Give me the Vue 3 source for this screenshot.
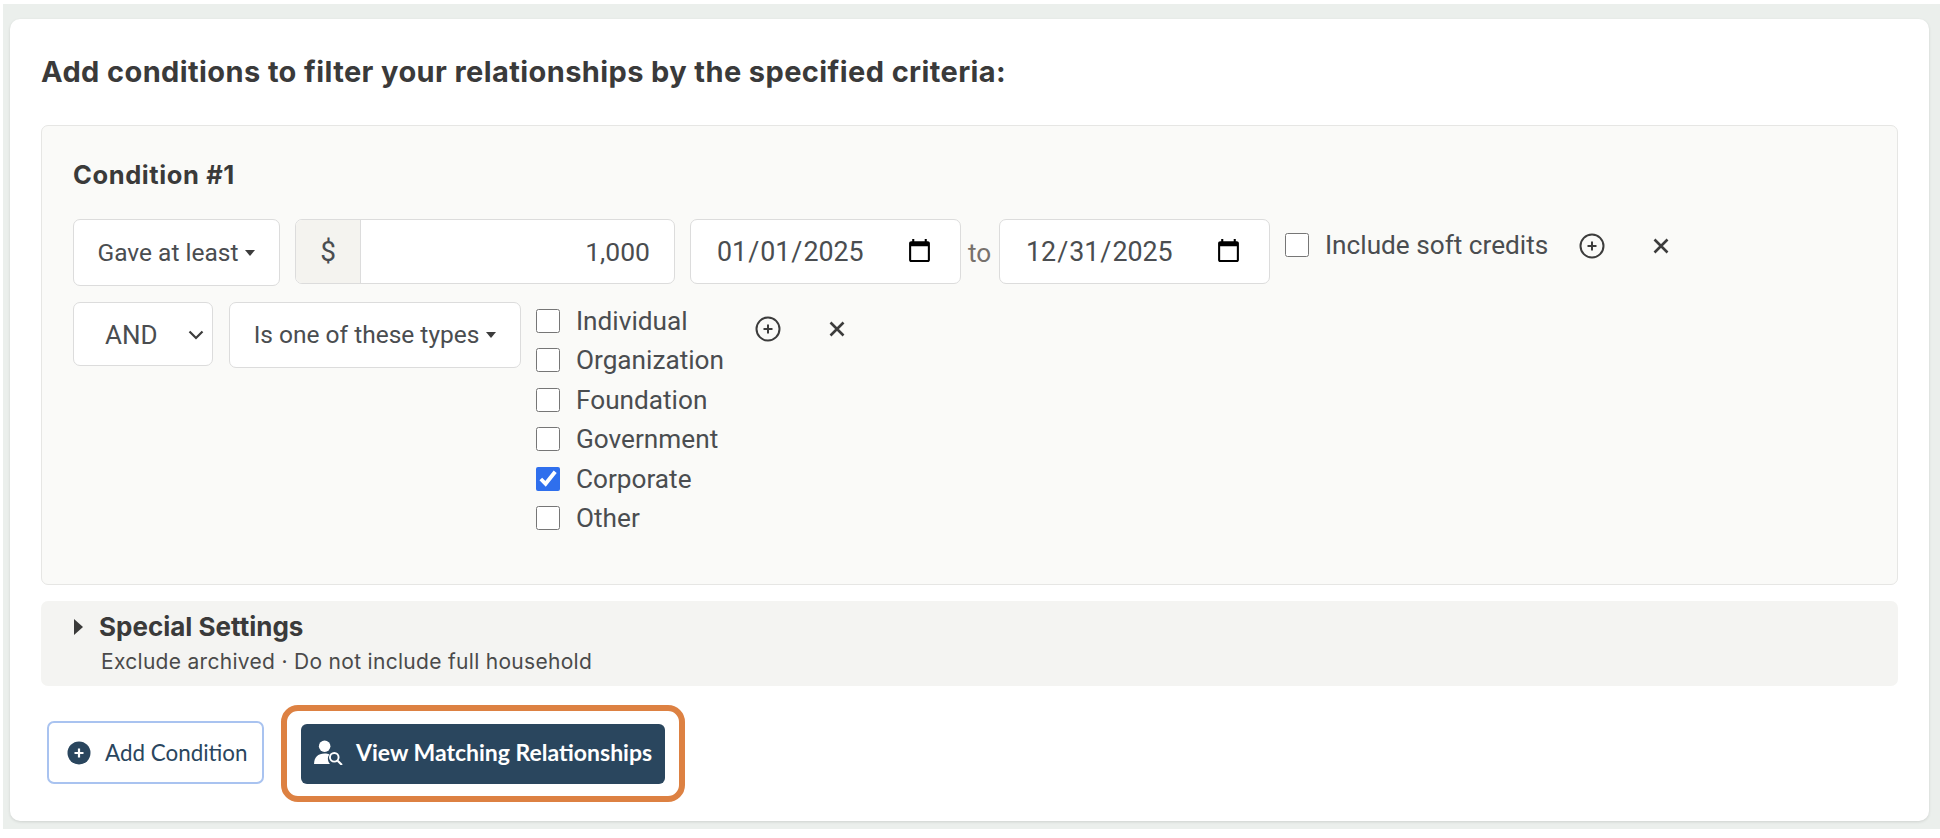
<script setup>
const types = [
  { name: "Individual", checked: false },
  { name: "Organization", checked: false },
  { name: "Foundation", checked: false },
  { name: "Government", checked: false },
  { name: "Corporate", checked: true },
  { name: "Other", checked: false },
];
</script>

<template>
  <div class="page">
    <div class="card">
      <h2 class="heading">Add conditions to filter your relationships by the specified criteria:</h2>

      <div class="panel">
        <h3 class="condition-title">Condition #1</h3>

        <div class="row first-row">
          <button class="dropdown gave" type="button">Gave at least<span class="caret"></span></button>
          <div class="money">
            <span class="addon">$</span>
            <input class="amount" type="text" value="1,000" />
          </div>
          <div class="dates">
            <input class="date" type="date" value="2025-01-01" />
            <span class="to">to</span>
            <input class="date" type="date" value="2025-12-31" />
          </div>
          <label class="soft">
            <input type="checkbox" />
            <span>Include soft credits</span>
          </label>
          <div class="actions">
            <svg class="icon" viewBox="0 0 26 26" fill="none" stroke="#3c3c3c">
              <circle cx="13" cy="13" r="11.5" stroke-width="2" />
              <path d="M13 8.5v9M8.5 13h9" stroke-width="2" />
            </svg>
            <svg class="icon" viewBox="0 0 26 26" fill="none" stroke="#3c3c3c">
              <path d="M6.5 6.5l13 13M19.500 6.500l-13 13" stroke-width="2.600" />
            </svg>
          </div>
        </div>

        <div class="row second-row">
          <div class="select-wrap">
            <select class="and-select">
              <option>AND</option>
            </select>
            <svg class="chevron" viewBox="0 0 16 10" fill="none" stroke="#3c3c3c">
              <path d="M1.500 1.500L8 8l6.500-6.500" stroke-width="2.200" />
            </svg>
          </div>
          <button class="dropdown types" type="button">Is one of these types<span class="caret"></span></button>
          <div class="type-list">
            <label v-for="t in types" :key="t.name" class="type-item">
              <input type="checkbox" :checked="t.checked" />
              <span>{{ t.name }}</span>
            </label>
          </div>
          <div class="actions">
            <svg class="icon" viewBox="0 0 26 26" fill="none" stroke="#3c3c3c">
              <circle cx="13" cy="13" r="11.5" stroke-width="2" />
              <path d="M13 8.5v9M8.5 13h9" stroke-width="2" />
            </svg>
            <svg class="icon" viewBox="0 0 26 26" fill="none" stroke="#3c3c3c">
              <path d="M6.5 6.5l13 13M19.500 6.500l-13 13" stroke-width="2.600" />
            </svg>
          </div>
        </div>
      </div>

      <div class="special">
        <div class="special-title"><span class="triangle"></span>Special Settings</div>
        <div class="special-sub">Exclude archived · Do not include full household</div>
      </div>

      <div class="buttons">
        <button class="btn-add" type="button">
          <svg class="add-icon" viewBox="0 0 24 24">
            <circle cx="12" cy="12" r="11.500" fill="#2a465e" />
            <path d="M12 7.500v9M7.500 12h9" stroke="#fff" stroke-width="2.200" />
          </svg>
          Add Condition
        </button>
        <div class="highlight">
          <button class="btn-view" type="button">
            <svg class="view-icon" viewBox="0 0 30 26">
              <circle cx="11" cy="6.500" r="6" fill="#fff" />
              <path d="M0 25c0-7 4-11 11-11 2 0 3.500.3 5 1-2.500 3-2 7 .5 10z" fill="#fff" />
              <circle cx="21" cy="18" r="4.500" fill="none" stroke="#fff" stroke-width="2" />
              <path d="M24.500 21.500L29 26" stroke="#fff" stroke-width="2.200" />
            </svg>
            View Matching Relationships
          </button>
        </div>
      </div>
    </div>
  </div>
</template>

<style>
html,
body {
  margin: 0;
  background: #fff;
}
</style>

<style scoped>
.page {
  box-sizing: border-box;
  height: 825px;
  margin: 4px 0 0 3px;
  padding: 15px 11px 0 7px;
  background: #ebefec;
}

.card {
  box-sizing: border-box;
  height: 802px;
  padding: 0 31px;
  background: #fff;
  border-radius: 10px;
  box-shadow: 0 1px 3px rgba(0, 0, 0, 0.12);
}

.heading {
  margin: 0;
  padding-top: 36px;
  height: 70px;
  box-sizing: content-box;
  font: 700 29px/34px Inter, sans-serif;
  letter-spacing: 0.4px;
  color: #3a3a3a;
}

.panel {
  box-sizing: border-box;
  height: 460px;
  padding: 0 31px;
  background: #fafaf8;
  border: 1px solid #e6e6e4;
  border-radius: 7px;
}

.condition-title {
  margin: 0;
  padding-top: 33px;
  height: 60px;
  font: 700 25.5px/32px Inter, sans-serif;
  letter-spacing: 0.6px;
  color: #3a3a3a;
}

.row {
  display: flex;
  align-items: flex-start;
  font: 400 26.2px/32px Roboto, sans-serif;
  color: #4a4d50;
}

.first-row {
  height: 83px;
}

.dropdown {
  box-sizing: border-box;
  display: flex;
  align-items: center;
  justify-content: center;
  padding: 0;
  background: #fff;
  border: 1px solid #dcdcdc;
  border-radius: 7px;
  font: 400 24.5px/32px Roboto, sans-serif;
  color: #4a4d50;
}

.gave {
  width: 207px;
  height: 67px;
}

.types {
  width: 292px;
  height: 66px;
  margin-left: 16px;
}

.caret {
  margin-left: 7px;
  border-top: 6px solid #3c3c3c;
  border-left: 5px solid transparent;
  border-right: 5px solid transparent;
}

.money {
  box-sizing: border-box;
  display: flex;
  width: 380px;
  height: 65px;
  margin-left: 15px;
  border: 1px solid #dcdcdc;
  border-radius: 7px;
  background: #fff;
  overflow: hidden;
}

.addon {
  width: 64px;
  text-align: center;
  background: #f4f3ef;
  border-right: 1px solid #dcdcdc;
  font-size: 28px;
  line-height: 63px;
}

.amount {
  flex: 1;
  min-width: 0;
  padding: 0 24px 0 0;
  border: 0;
  outline: 0;
  text-align: right;
  background: transparent;
  font: 400 26.5px Roboto, sans-serif;
  color: #4a4d50;
}

.dates {
  display: flex;
  margin-left: 15px;
  gap: 7px;
}

.date {
  box-sizing: border-box;
  width: 271px;
  height: 65px;
  padding: 0 25px 0 25px;
  background: #fff;
  border: 1px solid #dcdcdc;
  border-radius: 7px;
  font: 400 26.8px Roboto, sans-serif;
  color: #4a4d50;
}

.to {
  width: 24px;
  line-height: 68px;
  color: #77716c;
}

.soft {
  display: flex;
  align-items: center;
  gap: 16px;
  margin: 10px 0 0 15px;
}

input[type="checkbox"] {
  width: 24px;
  height: 24px;
  margin: 0;
  accent-color: #2f6fed;
  flex: none;
}

.actions {
  display: flex;
  gap: 43px;
  margin: 14px 0 0 31px;
}

.icon {
  width: 26px;
  height: 26px;
}

.select-wrap {
  position: relative;
  width: 140px;
  height: 64px;
}

.and-select {
  box-sizing: border-box;
  width: 100%;
  height: 100%;
  padding: 2px 0 0 31px;
  appearance: none;
  background: #fff;
  border: 1px solid #dcdcdc;
  border-radius: 7px;
  font: 400 26px Roboto, sans-serif;
  color: #4a4d50;
}

.chevron {
  position: absolute;
  top: 28px;
  right: 9px;
  width: 16px;
  height: 10px;
}

.type-list {
  display: flex;
  flex-direction: column;
  margin: -1px 0 0 15px;
}

.type-item {
  display: flex;
  align-items: center;
  gap: 16px;
  height: 39.5px;
}

.special {
  box-sizing: border-box;
  height: 85px;
  margin-top: 16px;
  padding: 9px 0 0 33px;
  background: #f4f4f2;
  border-radius: 7px;
}

.special-title {
  display: flex;
  align-items: center;
  font: 700 26px/34px Inter, sans-serif;
  color: #3a3a3a;
}

.triangle {
  margin-right: 16px;
  border-left: 9px solid #3a3a3a;
  border-top: 8px solid transparent;
  border-bottom: 8px solid transparent;
}

.special-sub {
  margin: 4px 0 0 27px;
  font: 400 21px/28px Inter, sans-serif;
  letter-spacing: 0.3px;
  color: #4a4a4a;
}

.buttons {
  display: flex;
  align-items: center;
  margin: 19px 0 0 6px;
  height: 97px;
}

.btn-add {
  box-sizing: border-box;
  display: flex;
  align-items: center;
  gap: 14px;
  width: 217px;
  height: 63px;
  margin-top: -2px;
  padding: 0 0 0 18px;
  background: #fff;
  border: 2px solid #a9c3f0;
  border-radius: 7px;
  font: 400 22.4px Lato, sans-serif;
  color: #2a465e;
}

.add-icon {
  width: 24px;
  height: 24px;
}

.highlight {
  box-sizing: border-box;
  display: flex;
  align-items: center;
  justify-content: center;
  width: 404px;
  height: 97px;
  margin-left: 17px;
  border: 6px solid #dd8142;
  border-radius: 17px;
}

.btn-view {
  box-sizing: border-box;
  display: flex;
  align-items: center;
  gap: 13px;
  width: 364px;
  height: 60px;
  padding: 0 0 3px 13px;
  background: #2a465e;
  border: 0;
  border-radius: 6px;
  font: 700 23px Lato, sans-serif;
  color: #fff;
}

.view-icon {
  width: 29px;
  height: 25px;
}
</style>
